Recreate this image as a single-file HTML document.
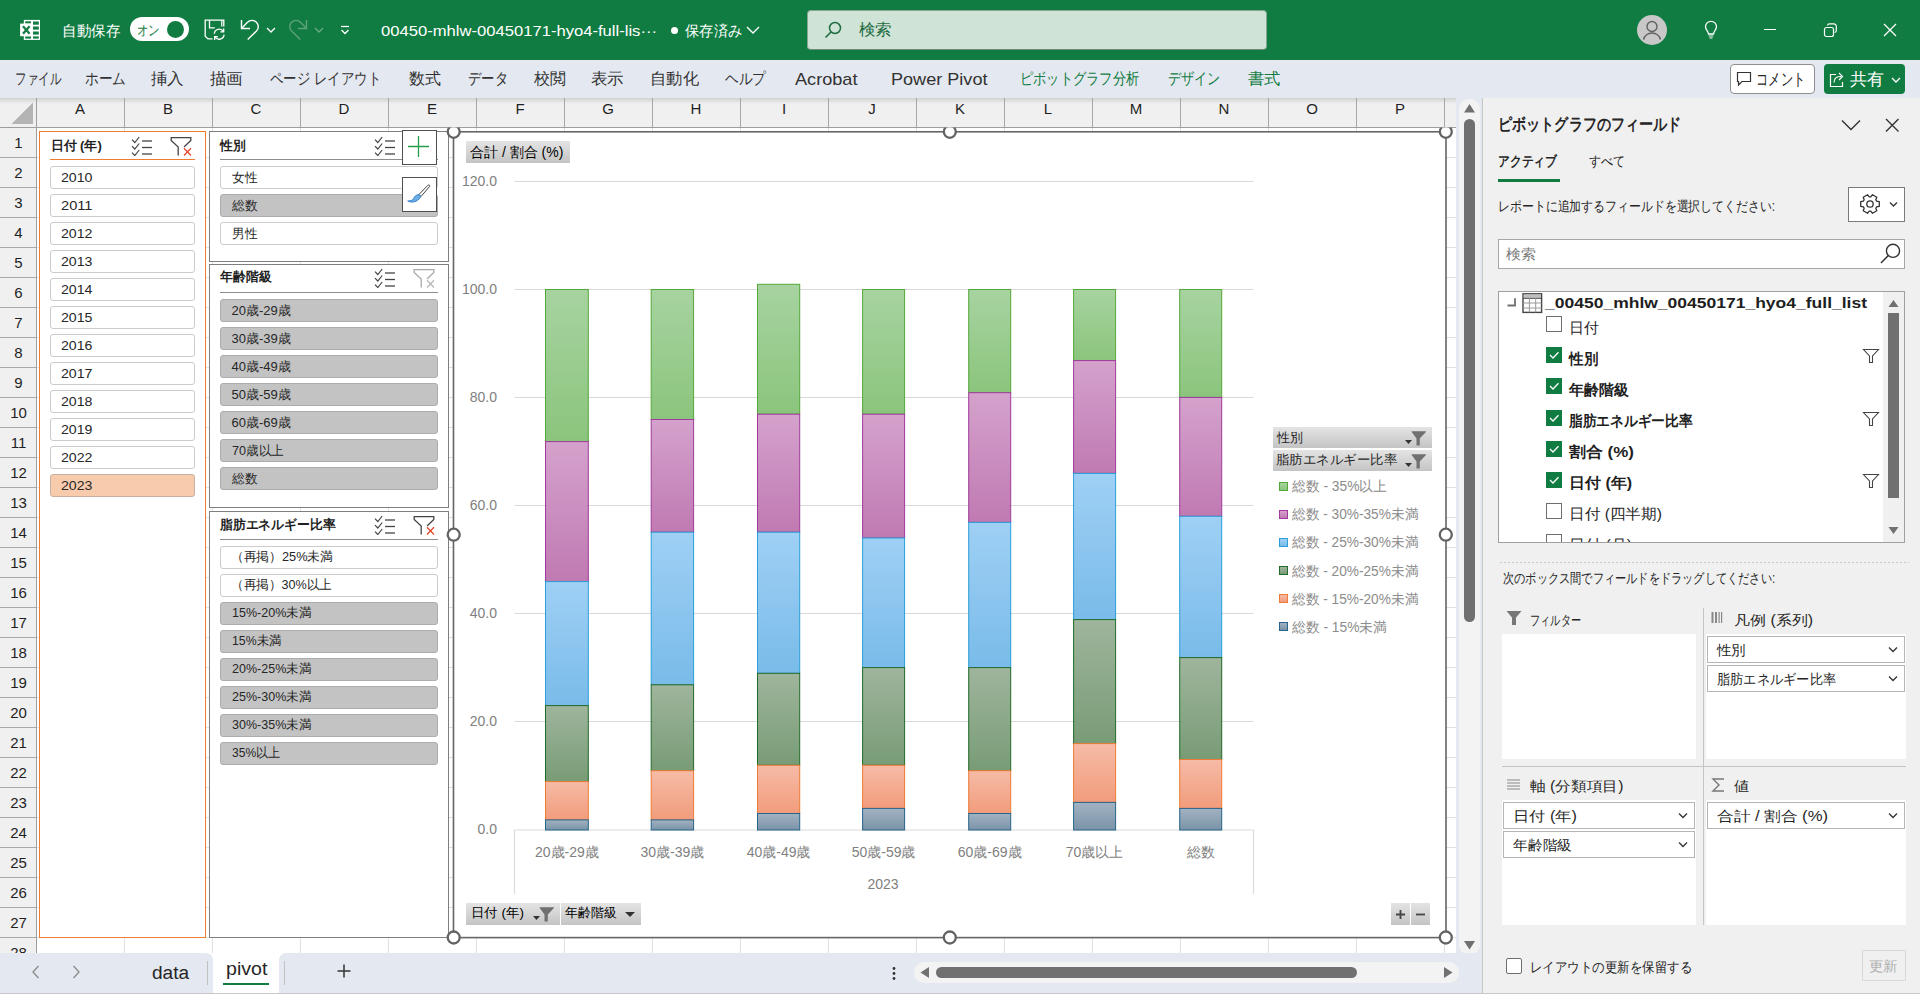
<!DOCTYPE html>
<html lang="ja">
<head>
<meta charset="utf-8">
<style>
*{margin:0;padding:0;box-sizing:border-box}
html,body{width:1920px;height:995px;overflow:hidden}
body{position:relative;font-family:"Liberation Sans",sans-serif;background:#fff;color:#222}
.a{position:absolute;white-space:nowrap}
</style>
</head>
<body>
<div class="a" style="left:0px;top:0px;width:1920px;height:60px;background:#107c41"></div>
<svg class="a" style="left:14px;top:14px" width="32" height="32" viewBox="0 0 32 32"><rect x="9.8" y="5.9" width="16.2" height="20" fill="#fff"/><g fill="#107c41"><rect x="11.2" y="7.3" width="5.8" height="2.2"/><rect x="11.2" y="22.4" width="5.8" height="2.2"/><rect x="19" y="7.5" width="5.8" height="3.2"/><rect x="19" y="12.5" width="5.8" height="3.1"/><rect x="19" y="17.5" width="5.8" height="3.1"/><rect x="19" y="22.4" width="5.8" height="2.2"/></g><rect x="6.1" y="9.6" width="11.4" height="12.6" fill="#fff"/><path d="M9 12.2 L15.6 19.8 M15.6 12.2 L9 19.8" stroke="#107c41" stroke-width="2.2"/></svg>
<div class="a" style="left:62.00px;top:19.50px;font-size:15px;line-height:21px;color:#fff;font-weight:normal;transform:scaleX(0.9667);transform-origin:0 50%;">自動保存</div>
<div class="a" style="left:130px;top:17px;width:59px;height:24px;border-radius:12px;background:#fff"></div>
<div class="a" style="left:137.00px;top:20.00px;font-size:14px;line-height:20px;color:#107c41;font-weight:normal;transform:scaleX(0.8214);transform-origin:0 50%;">オン</div>
<div class="a" style="left:167px;top:21px;width:17px;height:17px;border-radius:50%;background:#107c41"></div>
<svg class="a" style="left:204px;top:19px" width="24" height="22" viewBox="0 0 24 22"><g fill="none" stroke="#fff" stroke-width="1.3"><path d="M8.5 19.9 H4 L1.2 17.2 V1.2 H19.8 V7.6"/><path d="M5.5 1.2 V8.8 H10.8"/><path d="M17.8 1.2 V7.4"/><path d="M10.3 14.8 A4.9 4.9 0 0 1 19.4 12.6"/><path d="M20.1 15.6 A4.9 4.9 0 0 1 11 17.8"/><path d="M19.7 9.6 V12.9 H16.4"/><path d="M10.6 20.9 V17.6 H13.9"/></g></svg>
<svg class="a" style="left:238px;top:18px" width="24" height="24" viewBox="0 0 24 24"><path d="M3.5 2 V10.5 H12" fill="none" stroke="#fff" stroke-width="1.4"/><path d="M4 10 L9.5 4.2 A6.3 6.3 0 0 1 18.45 13.1 L9.7 21.5" fill="none" stroke="#fff" stroke-width="1.4"/></svg>
<svg class="a" style="left:266px;top:26px" width="10" height="8" viewBox="0 0 10 8"><path d="M1 2 L5 6 L9 2" fill="none" stroke="#fff" stroke-width="1.3"/></svg>
<svg class="a" style="left:286px;top:18px" width="24" height="24" viewBox="0 0 24 24"><g transform="translate(24,0) scale(-1,1)"><path d="M3.5 2 V10.5 H12" fill="none" stroke="#5fa27c" stroke-width="1.4"/><path d="M4 10 L9.5 4.2 A6.3 6.3 0 0 1 18.45 13.1 L9.7 21.5" fill="none" stroke="#5fa27c" stroke-width="1.4"/></g></svg>
<svg class="a" style="left:314px;top:26px" width="10" height="8" viewBox="0 0 10 8"><path d="M1 2 L5 6 L9 2" fill="none" stroke="#6aaa86" stroke-width="1.3"/></svg>
<svg class="a" style="left:339px;top:24px" width="12" height="12" viewBox="0 0 12 12"><path d="M2 2.5 H10" stroke="#fff" stroke-width="1.3"/><path d="M2.5 6 L6 9.5 L9.5 6" fill="none" stroke="#fff" stroke-width="1.3"/></svg>
<div class="a" style="left:381.00px;top:19.50px;font-size:15px;line-height:21px;color:#fff;font-weight:normal;transform:scaleX(1.1072);transform-origin:0 50%;">00450-mhlw-00450171-hyo4-full-lis···</div>
<div class="a" style="left:671px;top:27px;width:7px;height:7px;border-radius:50%;background:#fff"></div>
<div class="a" style="left:685.00px;top:19.50px;font-size:15px;line-height:21px;color:#fff;font-weight:normal;transform:scaleX(0.9500);transform-origin:0 50%;">保存済み</div>
<svg class="a" style="left:745px;top:24px" width="16" height="12" viewBox="0 0 16 12"><path d="M2 3 L8 9 L14 3" fill="none" stroke="#fff" stroke-width="1.4"/></svg>
<div class="a" style="left:807px;top:10px;width:460px;height:40px;border-radius:4px;background:#cfe3d7;border:1px solid #86a593;border-bottom-color:#6f8c7b"></div>
<svg class="a" style="left:822px;top:19px" width="22" height="22" viewBox="0 0 22 22"><circle cx="13" cy="9" r="5.5" fill="none" stroke="#1e6b40" stroke-width="1.5"/><path d="M9 13 L3.5 18.5" stroke="#1e6b40" stroke-width="1.6"/></svg>
<div class="a" style="left:859.00px;top:19.00px;font-size:16px;line-height:22px;color:#1e6b40;font-weight:normal;transform:scaleX(1.0312);transform-origin:0 50%;">検索</div>
<div class="a" style="left:1637px;top:15px;width:30px;height:30px;border-radius:50%;background:#c8c8c8"></div>
<svg class="a" style="left:1637px;top:15px" width="30" height="30" viewBox="0 0 30 30"><circle cx="15" cy="11.5" r="5" fill="none" stroke="#616161" stroke-width="1.4"/><path d="M6.5 24.5 A8.8 8.8 0 0 1 23.5 24.5" fill="none" stroke="#616161" stroke-width="1.4"/></svg>
<svg class="a" style="left:1702px;top:20px" width="18" height="20" viewBox="0 0 18 20"><path d="M6.5 14 C6.5 11 3.5 10 3.5 6.8 A5.5 5.5 0 0 1 14.5 6.8 C14.5 10 11.5 11 11.5 14 Z" fill="none" stroke="#fff" stroke-width="1.3"/><path d="M6.8 16 H11.2 M7.5 18 H10.5" stroke="#fff" stroke-width="1.2"/></svg>
<div class="a" style="left:1764px;top:29px;width:12px;height:1.3px;background:#fff"></div>
<svg class="a" style="left:1822px;top:22px" width="16" height="16" viewBox="0 0 16 16"><rect x="2.5" y="5.5" width="9" height="9" rx="2" fill="none" stroke="#fff" stroke-width="1.2"/><path d="M5.5 3.5 A2 2 0 0 1 7.5 1.8 H12 A2.5 2.5 0 0 1 14.3 4 V8.5 A2 2 0 0 1 12.5 10.5" fill="none" stroke="#fff" stroke-width="1.2"/></svg>
<svg class="a" style="left:1882px;top:22px" width="16" height="16" viewBox="0 0 16 16"><path d="M2 2 L14 14 M14 2 L2 14" stroke="#fff" stroke-width="1.3"/></svg>
<div class="a" style="left:0px;top:60px;width:1920px;height:38px;background:#e4e8f0"></div>
<div class="a" style="left:15.00px;top:68.00px;font-size:16px;line-height:22px;color:#323232;font-weight:normal;transform:scaleX(0.7188);transform-origin:0 50%;">ファイル</div>
<div class="a" style="left:85.00px;top:68.00px;font-size:16px;line-height:22px;color:#323232;font-weight:normal;transform:scaleX(0.8542);transform-origin:0 50%;">ホーム</div>
<div class="a" style="left:151.00px;top:68.00px;font-size:16px;line-height:22px;color:#323232;font-weight:normal;transform:scaleX(1.0312);transform-origin:0 50%;">挿入</div>
<div class="a" style="left:209.50px;top:68.00px;font-size:16px;line-height:22px;color:#323232;font-weight:normal;transform:scaleX(1.0312);transform-origin:0 50%;">描画</div>
<div class="a" style="left:270.00px;top:68.00px;font-size:16px;line-height:22px;color:#323232;font-weight:normal;transform:scaleX(0.8380);transform-origin:0 50%;">ページ レイアウト</div>
<div class="a" style="left:409.00px;top:68.00px;font-size:16px;line-height:22px;color:#323232;font-weight:normal;">数式</div>
<div class="a" style="left:467.50px;top:68.00px;font-size:16px;line-height:22px;color:#323232;font-weight:normal;transform:scaleX(0.8333);transform-origin:0 50%;">データ</div>
<div class="a" style="left:534.00px;top:68.00px;font-size:16px;line-height:22px;color:#323232;font-weight:normal;">校閲</div>
<div class="a" style="left:591.00px;top:68.00px;font-size:16px;line-height:22px;color:#323232;font-weight:normal;transform:scaleX(1.0312);transform-origin:0 50%;">表示</div>
<div class="a" style="left:650.00px;top:68.00px;font-size:16px;line-height:22px;color:#323232;font-weight:normal;transform:scaleX(1.0208);transform-origin:0 50%;">自動化</div>
<div class="a" style="left:725.00px;top:68.00px;font-size:16px;line-height:22px;color:#323232;font-weight:normal;transform:scaleX(0.8542);transform-origin:0 50%;">ヘルプ</div>
<div class="a" style="left:795.00px;top:68.00px;font-size:17px;line-height:24px;color:#323232;font-weight:normal;transform:scaleX(1.0667);transform-origin:0 50%;">Acrobat</div>
<div class="a" style="left:891.00px;top:68.00px;font-size:17px;line-height:24px;color:#323232;font-weight:normal;transform:scaleX(1.0639);transform-origin:0 50%;">Power Pivot</div>
<div class="a" style="left:1020.00px;top:68.00px;font-size:16px;line-height:22px;color:#107c41;font-weight:normal;transform:scaleX(0.8264);transform-origin:0 50%;">ピボットグラフ分析</div>
<div class="a" style="left:1167.50px;top:68.00px;font-size:16px;line-height:22px;color:#107c41;font-weight:normal;transform:scaleX(0.8203);transform-origin:0 50%;">デザイン</div>
<div class="a" style="left:1247.50px;top:68.00px;font-size:16px;line-height:22px;color:#107c41;font-weight:normal;transform:scaleX(1.0156);transform-origin:0 50%;">書式</div>
<div class="a" style="left:1730px;top:64px;width:85px;height:30px;border:1px solid #8f8f8f;border-radius:4px;background:#fff"></div>
<svg class="a" style="left:1736px;top:71px" width="16" height="16" viewBox="0 0 16 16"><path d="M1.5 1.5 H14.5 V10.5 H6 L2.5 14 V10.5 H1.5 Z" fill="none" stroke="#333" stroke-width="1.2"/></svg>
<div class="a" style="left:1756.00px;top:67.60px;font-size:17px;line-height:24px;color:#262626;font-weight:normal;transform:scaleX(0.7206);transform-origin:0 50%;">コメント</div>
<div class="a" style="left:1824px;top:64px;width:81px;height:30px;border-radius:4px;background:#107c41"></div>
<svg class="a" style="left:1829px;top:71px" width="18" height="17" viewBox="0 0 18 17"><path d="M7 3.5 H1.5 V15.5 H13.5 V11" fill="none" stroke="#fff" stroke-width="1.2"/><path d="M5 11.5 C5 7 8 5.5 12 5.5 M10 2 L13.5 5.5 L10 9" fill="none" stroke="#fff" stroke-width="1.2"/></svg>
<div class="a" style="left:1850.00px;top:68.00px;font-size:17px;line-height:24px;color:#fff;font-weight:normal;">共有</div>
<svg class="a" style="left:1891px;top:76px" width="10" height="8" viewBox="0 0 10 8"><path d="M1 2 L5 6 L9 2" fill="none" stroke="#fff" stroke-width="1.3"/></svg>
<div class="a" style="left:0px;top:98px;width:1456px;height:855px;background:#fff"></div>
<div class="a" style="left:0px;top:98px;width:1456px;height:29px;background:#f0f0f0"></div>
<div class="a" style="left:0px;top:127px;width:36px;height:826px;background:#f0f0f0"></div>
<div class="a" style="left:0px;top:98px;width:1456px;height:6px;background:linear-gradient(#d2d2d2,rgba(240,240,240,0))"></div>
<svg class="a" style="left:0px;top:0px" width="1920" height="995" viewBox="0 0 1920 995"><line x1="124.5" y1="127" x2="124.5" y2="953" stroke="#e1e1e1"/><line x1="124.5" y1="98" x2="124.5" y2="127" stroke="#a6a6a6"/><line x1="212.5" y1="127" x2="212.5" y2="953" stroke="#e1e1e1"/><line x1="212.5" y1="98" x2="212.5" y2="127" stroke="#a6a6a6"/><line x1="300.5" y1="127" x2="300.5" y2="953" stroke="#e1e1e1"/><line x1="300.5" y1="98" x2="300.5" y2="127" stroke="#a6a6a6"/><line x1="388.5" y1="127" x2="388.5" y2="953" stroke="#e1e1e1"/><line x1="388.5" y1="98" x2="388.5" y2="127" stroke="#a6a6a6"/><line x1="476.5" y1="127" x2="476.5" y2="953" stroke="#e1e1e1"/><line x1="476.5" y1="98" x2="476.5" y2="127" stroke="#a6a6a6"/><line x1="564.5" y1="127" x2="564.5" y2="953" stroke="#e1e1e1"/><line x1="564.5" y1="98" x2="564.5" y2="127" stroke="#a6a6a6"/><line x1="652.5" y1="127" x2="652.5" y2="953" stroke="#e1e1e1"/><line x1="652.5" y1="98" x2="652.5" y2="127" stroke="#a6a6a6"/><line x1="740.5" y1="127" x2="740.5" y2="953" stroke="#e1e1e1"/><line x1="740.5" y1="98" x2="740.5" y2="127" stroke="#a6a6a6"/><line x1="828.5" y1="127" x2="828.5" y2="953" stroke="#e1e1e1"/><line x1="828.5" y1="98" x2="828.5" y2="127" stroke="#a6a6a6"/><line x1="916.5" y1="127" x2="916.5" y2="953" stroke="#e1e1e1"/><line x1="916.5" y1="98" x2="916.5" y2="127" stroke="#a6a6a6"/><line x1="1004.5" y1="127" x2="1004.5" y2="953" stroke="#e1e1e1"/><line x1="1004.5" y1="98" x2="1004.5" y2="127" stroke="#a6a6a6"/><line x1="1092.5" y1="127" x2="1092.5" y2="953" stroke="#e1e1e1"/><line x1="1092.5" y1="98" x2="1092.5" y2="127" stroke="#a6a6a6"/><line x1="1180.5" y1="127" x2="1180.5" y2="953" stroke="#e1e1e1"/><line x1="1180.5" y1="98" x2="1180.5" y2="127" stroke="#a6a6a6"/><line x1="1268.5" y1="127" x2="1268.5" y2="953" stroke="#e1e1e1"/><line x1="1268.5" y1="98" x2="1268.5" y2="127" stroke="#a6a6a6"/><line x1="1356.5" y1="127" x2="1356.5" y2="953" stroke="#e1e1e1"/><line x1="1356.5" y1="98" x2="1356.5" y2="127" stroke="#a6a6a6"/><line x1="1444.5" y1="127" x2="1444.5" y2="953" stroke="#e1e1e1"/><line x1="1444.5" y1="98" x2="1444.5" y2="127" stroke="#a6a6a6"/><line x1="36" y1="157.5" x2="1456" y2="157.5" stroke="#e1e1e1"/><line x1="0" y1="157.5" x2="36" y2="157.5" stroke="#a8a8a8"/><line x1="36" y1="187.5" x2="1456" y2="187.5" stroke="#e1e1e1"/><line x1="0" y1="187.5" x2="36" y2="187.5" stroke="#a8a8a8"/><line x1="36" y1="217.5" x2="1456" y2="217.5" stroke="#e1e1e1"/><line x1="0" y1="217.5" x2="36" y2="217.5" stroke="#a8a8a8"/><line x1="36" y1="247.5" x2="1456" y2="247.5" stroke="#e1e1e1"/><line x1="0" y1="247.5" x2="36" y2="247.5" stroke="#a8a8a8"/><line x1="36" y1="277.5" x2="1456" y2="277.5" stroke="#e1e1e1"/><line x1="0" y1="277.5" x2="36" y2="277.5" stroke="#a8a8a8"/><line x1="36" y1="307.5" x2="1456" y2="307.5" stroke="#e1e1e1"/><line x1="0" y1="307.5" x2="36" y2="307.5" stroke="#a8a8a8"/><line x1="36" y1="337.5" x2="1456" y2="337.5" stroke="#e1e1e1"/><line x1="0" y1="337.5" x2="36" y2="337.5" stroke="#a8a8a8"/><line x1="36" y1="367.5" x2="1456" y2="367.5" stroke="#e1e1e1"/><line x1="0" y1="367.5" x2="36" y2="367.5" stroke="#a8a8a8"/><line x1="36" y1="397.5" x2="1456" y2="397.5" stroke="#e1e1e1"/><line x1="0" y1="397.5" x2="36" y2="397.5" stroke="#a8a8a8"/><line x1="36" y1="427.5" x2="1456" y2="427.5" stroke="#e1e1e1"/><line x1="0" y1="427.5" x2="36" y2="427.5" stroke="#a8a8a8"/><line x1="36" y1="457.5" x2="1456" y2="457.5" stroke="#e1e1e1"/><line x1="0" y1="457.5" x2="36" y2="457.5" stroke="#a8a8a8"/><line x1="36" y1="487.5" x2="1456" y2="487.5" stroke="#e1e1e1"/><line x1="0" y1="487.5" x2="36" y2="487.5" stroke="#a8a8a8"/><line x1="36" y1="517.5" x2="1456" y2="517.5" stroke="#e1e1e1"/><line x1="0" y1="517.5" x2="36" y2="517.5" stroke="#a8a8a8"/><line x1="36" y1="547.5" x2="1456" y2="547.5" stroke="#e1e1e1"/><line x1="0" y1="547.5" x2="36" y2="547.5" stroke="#a8a8a8"/><line x1="36" y1="577.5" x2="1456" y2="577.5" stroke="#e1e1e1"/><line x1="0" y1="577.5" x2="36" y2="577.5" stroke="#a8a8a8"/><line x1="36" y1="607.5" x2="1456" y2="607.5" stroke="#e1e1e1"/><line x1="0" y1="607.5" x2="36" y2="607.5" stroke="#a8a8a8"/><line x1="36" y1="637.5" x2="1456" y2="637.5" stroke="#e1e1e1"/><line x1="0" y1="637.5" x2="36" y2="637.5" stroke="#a8a8a8"/><line x1="36" y1="667.5" x2="1456" y2="667.5" stroke="#e1e1e1"/><line x1="0" y1="667.5" x2="36" y2="667.5" stroke="#a8a8a8"/><line x1="36" y1="697.5" x2="1456" y2="697.5" stroke="#e1e1e1"/><line x1="0" y1="697.5" x2="36" y2="697.5" stroke="#a8a8a8"/><line x1="36" y1="727.5" x2="1456" y2="727.5" stroke="#e1e1e1"/><line x1="0" y1="727.5" x2="36" y2="727.5" stroke="#a8a8a8"/><line x1="36" y1="757.5" x2="1456" y2="757.5" stroke="#e1e1e1"/><line x1="0" y1="757.5" x2="36" y2="757.5" stroke="#a8a8a8"/><line x1="36" y1="787.5" x2="1456" y2="787.5" stroke="#e1e1e1"/><line x1="0" y1="787.5" x2="36" y2="787.5" stroke="#a8a8a8"/><line x1="36" y1="817.5" x2="1456" y2="817.5" stroke="#e1e1e1"/><line x1="0" y1="817.5" x2="36" y2="817.5" stroke="#a8a8a8"/><line x1="36" y1="847.5" x2="1456" y2="847.5" stroke="#e1e1e1"/><line x1="0" y1="847.5" x2="36" y2="847.5" stroke="#a8a8a8"/><line x1="36" y1="877.5" x2="1456" y2="877.5" stroke="#e1e1e1"/><line x1="0" y1="877.5" x2="36" y2="877.5" stroke="#a8a8a8"/><line x1="36" y1="907.5" x2="1456" y2="907.5" stroke="#e1e1e1"/><line x1="0" y1="907.5" x2="36" y2="907.5" stroke="#a8a8a8"/><line x1="36" y1="937.5" x2="1456" y2="937.5" stroke="#e1e1e1"/><line x1="0" y1="937.5" x2="36" y2="937.5" stroke="#a8a8a8"/><line x1="0" y1="127.5" x2="1456" y2="127.5" stroke="#9e9e9e"/><line x1="36.5" y1="98" x2="36.5" y2="953" stroke="#9e9e9e"/><path d="M11.5 124 L33 124 L33 102.5 Z" fill="#b4b4b4"/></svg>
<div class="a" style="left:74.99px;top:98.00px;font-size:15px;line-height:21px;color:#1f1f1f;font-weight:normal;">A</div>
<div class="a" style="left:162.99px;top:98.00px;font-size:15px;line-height:21px;color:#1f1f1f;font-weight:normal;">B</div>
<div class="a" style="left:250.58px;top:98.00px;font-size:15px;line-height:21px;color:#1f1f1f;font-weight:normal;">C</div>
<div class="a" style="left:338.58px;top:98.00px;font-size:15px;line-height:21px;color:#1f1f1f;font-weight:normal;">D</div>
<div class="a" style="left:426.99px;top:98.00px;font-size:15px;line-height:21px;color:#1f1f1f;font-weight:normal;">E</div>
<div class="a" style="left:515.41px;top:98.00px;font-size:15px;line-height:21px;color:#1f1f1f;font-weight:normal;">F</div>
<div class="a" style="left:602.16px;top:98.00px;font-size:15px;line-height:21px;color:#1f1f1f;font-weight:normal;">G</div>
<div class="a" style="left:690.58px;top:98.00px;font-size:15px;line-height:21px;color:#1f1f1f;font-weight:normal;">H</div>
<div class="a" style="left:781.91px;top:98.00px;font-size:15px;line-height:21px;color:#1f1f1f;font-weight:normal;">I</div>
<div class="a" style="left:868.25px;top:98.00px;font-size:15px;line-height:21px;color:#1f1f1f;font-weight:normal;">J</div>
<div class="a" style="left:954.99px;top:98.00px;font-size:15px;line-height:21px;color:#1f1f1f;font-weight:normal;">K</div>
<div class="a" style="left:1043.83px;top:98.00px;font-size:15px;line-height:21px;color:#1f1f1f;font-weight:normal;">L</div>
<div class="a" style="left:1129.75px;top:98.00px;font-size:15px;line-height:21px;color:#1f1f1f;font-weight:normal;">M</div>
<div class="a" style="left:1218.58px;top:98.00px;font-size:15px;line-height:21px;color:#1f1f1f;font-weight:normal;">N</div>
<div class="a" style="left:1306.16px;top:98.00px;font-size:15px;line-height:21px;color:#1f1f1f;font-weight:normal;">O</div>
<div class="a" style="left:1394.99px;top:98.00px;font-size:15px;line-height:21px;color:#1f1f1f;font-weight:normal;">P</div>
<div class="a" style="left:14.33px;top:131.50px;font-size:15px;line-height:21px;color:#1f1f1f;font-weight:normal;">1</div>
<div class="a" style="left:14.33px;top:161.50px;font-size:15px;line-height:21px;color:#1f1f1f;font-weight:normal;">2</div>
<div class="a" style="left:14.33px;top:191.50px;font-size:15px;line-height:21px;color:#1f1f1f;font-weight:normal;">3</div>
<div class="a" style="left:14.33px;top:221.50px;font-size:15px;line-height:21px;color:#1f1f1f;font-weight:normal;">4</div>
<div class="a" style="left:14.33px;top:251.50px;font-size:15px;line-height:21px;color:#1f1f1f;font-weight:normal;">5</div>
<div class="a" style="left:14.33px;top:281.50px;font-size:15px;line-height:21px;color:#1f1f1f;font-weight:normal;">6</div>
<div class="a" style="left:14.33px;top:311.50px;font-size:15px;line-height:21px;color:#1f1f1f;font-weight:normal;">7</div>
<div class="a" style="left:14.33px;top:341.50px;font-size:15px;line-height:21px;color:#1f1f1f;font-weight:normal;">8</div>
<div class="a" style="left:14.33px;top:371.50px;font-size:15px;line-height:21px;color:#1f1f1f;font-weight:normal;">9</div>
<div class="a" style="left:10.16px;top:401.50px;font-size:15px;line-height:21px;color:#1f1f1f;font-weight:normal;">10</div>
<div class="a" style="left:10.71px;top:431.50px;font-size:15px;line-height:21px;color:#1f1f1f;font-weight:normal;">11</div>
<div class="a" style="left:10.16px;top:461.50px;font-size:15px;line-height:21px;color:#1f1f1f;font-weight:normal;">12</div>
<div class="a" style="left:10.16px;top:491.50px;font-size:15px;line-height:21px;color:#1f1f1f;font-weight:normal;">13</div>
<div class="a" style="left:10.16px;top:521.50px;font-size:15px;line-height:21px;color:#1f1f1f;font-weight:normal;">14</div>
<div class="a" style="left:10.16px;top:551.50px;font-size:15px;line-height:21px;color:#1f1f1f;font-weight:normal;">15</div>
<div class="a" style="left:10.16px;top:581.50px;font-size:15px;line-height:21px;color:#1f1f1f;font-weight:normal;">16</div>
<div class="a" style="left:10.16px;top:611.50px;font-size:15px;line-height:21px;color:#1f1f1f;font-weight:normal;">17</div>
<div class="a" style="left:10.16px;top:641.50px;font-size:15px;line-height:21px;color:#1f1f1f;font-weight:normal;">18</div>
<div class="a" style="left:10.16px;top:671.50px;font-size:15px;line-height:21px;color:#1f1f1f;font-weight:normal;">19</div>
<div class="a" style="left:10.16px;top:701.50px;font-size:15px;line-height:21px;color:#1f1f1f;font-weight:normal;">20</div>
<div class="a" style="left:10.16px;top:731.50px;font-size:15px;line-height:21px;color:#1f1f1f;font-weight:normal;">21</div>
<div class="a" style="left:10.16px;top:761.50px;font-size:15px;line-height:21px;color:#1f1f1f;font-weight:normal;">22</div>
<div class="a" style="left:10.16px;top:791.50px;font-size:15px;line-height:21px;color:#1f1f1f;font-weight:normal;">23</div>
<div class="a" style="left:10.16px;top:821.50px;font-size:15px;line-height:21px;color:#1f1f1f;font-weight:normal;">24</div>
<div class="a" style="left:10.16px;top:851.50px;font-size:15px;line-height:21px;color:#1f1f1f;font-weight:normal;">25</div>
<div class="a" style="left:10.16px;top:881.50px;font-size:15px;line-height:21px;color:#1f1f1f;font-weight:normal;">26</div>
<div class="a" style="left:10.16px;top:911.50px;font-size:15px;line-height:21px;color:#1f1f1f;font-weight:normal;">27</div>
<div class="a" style="left:10.16px;top:941.50px;font-size:15px;line-height:21px;color:#1f1f1f;font-weight:normal;">28</div>
<div class="a" style="left:39px;top:131px;width:167px;height:807px;border:1px solid #ed7d31;background:#fff"></div>
<div class="a" style="left:50.50px;top:136.50px;font-size:13px;line-height:18px;color:#1f1f1f;font-weight:bold;">日付 (年)</div>
<svg class="a" style="left:131px;top:136px" width="22" height="20" viewBox="0 0 22 20"><path d="M1 3.7 L3.8 6.5 L8.2 1.0" fill="none" stroke="#444" stroke-width="1.2"/><line x1="11" y1="5.0" x2="21" y2="5.0" stroke="#444" stroke-width="1.3"/><path d="M1 10.2 L3.8 13.0 L8.2 7.5" fill="none" stroke="#444" stroke-width="1.2"/><line x1="11" y1="11.5" x2="21" y2="11.5" stroke="#444" stroke-width="1.3"/><path d="M1 16.7 L3.8 19.5 L8.2 14.0" fill="none" stroke="#444" stroke-width="1.2"/><line x1="11" y1="18.0" x2="21" y2="18.0" stroke="#444" stroke-width="1.3"/></svg>
<svg class="a" style="left:170px;top:136px" width="22" height="20" viewBox="0 0 22 20"><path d="M8.2 19.5 V11 L1.2 4.5 V1.6 H20.8 V4.5 L14 11" fill="none" stroke="#444" stroke-width="1.3"/><path d="M14 12.2 L21 19.5 M21 12.2 L14 19.5" stroke="#e8482b" stroke-width="1.3"/></svg>
<div class="a" style="left:50px;top:159px;width:145px;height:1px;background:#ed7d31"></div>
<div class="a" style="left:50px;top:166px;width:145px;height:23px;background:#fff;border:1px solid #cccccc;border-radius:3px"></div>
<div class="a" style="left:61.00px;top:168.50px;font-size:13px;line-height:18px;color:#262626;font-weight:normal;transform:scaleX(1.0891);transform-origin:0 50%;">2010</div>
<div class="a" style="left:50px;top:194px;width:145px;height:23px;background:#fff;border:1px solid #cccccc;border-radius:3px"></div>
<div class="a" style="left:61.00px;top:196.50px;font-size:13px;line-height:18px;color:#262626;font-weight:normal;transform:scaleX(1.1263);transform-origin:0 50%;">2011</div>
<div class="a" style="left:50px;top:222px;width:145px;height:23px;background:#fff;border:1px solid #cccccc;border-radius:3px"></div>
<div class="a" style="left:61.00px;top:224.50px;font-size:13px;line-height:18px;color:#262626;font-weight:normal;transform:scaleX(1.0891);transform-origin:0 50%;">2012</div>
<div class="a" style="left:50px;top:250px;width:145px;height:23px;background:#fff;border:1px solid #cccccc;border-radius:3px"></div>
<div class="a" style="left:61.00px;top:252.50px;font-size:13px;line-height:18px;color:#262626;font-weight:normal;transform:scaleX(1.0891);transform-origin:0 50%;">2013</div>
<div class="a" style="left:50px;top:278px;width:145px;height:23px;background:#fff;border:1px solid #cccccc;border-radius:3px"></div>
<div class="a" style="left:61.00px;top:280.50px;font-size:13px;line-height:18px;color:#262626;font-weight:normal;transform:scaleX(1.0891);transform-origin:0 50%;">2014</div>
<div class="a" style="left:50px;top:306px;width:145px;height:23px;background:#fff;border:1px solid #cccccc;border-radius:3px"></div>
<div class="a" style="left:61.00px;top:308.50px;font-size:13px;line-height:18px;color:#262626;font-weight:normal;transform:scaleX(1.0891);transform-origin:0 50%;">2015</div>
<div class="a" style="left:50px;top:334px;width:145px;height:23px;background:#fff;border:1px solid #cccccc;border-radius:3px"></div>
<div class="a" style="left:61.00px;top:336.50px;font-size:13px;line-height:18px;color:#262626;font-weight:normal;transform:scaleX(1.0891);transform-origin:0 50%;">2016</div>
<div class="a" style="left:50px;top:362px;width:145px;height:23px;background:#fff;border:1px solid #cccccc;border-radius:3px"></div>
<div class="a" style="left:61.00px;top:364.50px;font-size:13px;line-height:18px;color:#262626;font-weight:normal;transform:scaleX(1.0891);transform-origin:0 50%;">2017</div>
<div class="a" style="left:50px;top:390px;width:145px;height:23px;background:#fff;border:1px solid #cccccc;border-radius:3px"></div>
<div class="a" style="left:61.00px;top:392.50px;font-size:13px;line-height:18px;color:#262626;font-weight:normal;transform:scaleX(1.0891);transform-origin:0 50%;">2018</div>
<div class="a" style="left:50px;top:418px;width:145px;height:23px;background:#fff;border:1px solid #cccccc;border-radius:3px"></div>
<div class="a" style="left:61.00px;top:420.50px;font-size:13px;line-height:18px;color:#262626;font-weight:normal;transform:scaleX(1.0891);transform-origin:0 50%;">2019</div>
<div class="a" style="left:50px;top:446px;width:145px;height:23px;background:#fff;border:1px solid #cccccc;border-radius:3px"></div>
<div class="a" style="left:61.00px;top:448.50px;font-size:13px;line-height:18px;color:#262626;font-weight:normal;transform:scaleX(1.0891);transform-origin:0 50%;">2022</div>
<div class="a" style="left:50px;top:474px;width:145px;height:23px;background:#f8cbad;border:1px solid #c9b0a0;border-radius:3px"></div>
<div class="a" style="left:61.00px;top:476.50px;font-size:13px;line-height:18px;color:#262626;font-weight:normal;transform:scaleX(1.0891);transform-origin:0 50%;">2023</div>
<div class="a" style="left:209px;top:131px;width:240px;height:131px;border:1px solid #7f7f7f;background:#fff"></div>
<div class="a" style="left:220.00px;top:136.50px;font-size:13px;line-height:18px;color:#1f1f1f;font-weight:bold;transform:scaleX(0.9808);transform-origin:0 50%;">性別</div>
<svg class="a" style="left:374px;top:136px" width="22" height="20" viewBox="0 0 22 20"><path d="M1 3.7 L3.8 6.5 L8.2 1.0" fill="none" stroke="#444" stroke-width="1.2"/><line x1="11" y1="5.0" x2="21" y2="5.0" stroke="#444" stroke-width="1.3"/><path d="M1 10.2 L3.8 13.0 L8.2 7.5" fill="none" stroke="#444" stroke-width="1.2"/><line x1="11" y1="11.5" x2="21" y2="11.5" stroke="#444" stroke-width="1.3"/><path d="M1 16.7 L3.8 19.5 L8.2 14.0" fill="none" stroke="#444" stroke-width="1.2"/><line x1="11" y1="18.0" x2="21" y2="18.0" stroke="#444" stroke-width="1.3"/></svg>
<div class="a" style="left:220px;top:159px;width:218px;height:1px;background:#8c8c8c"></div>
<div class="a" style="left:220px;top:166px;width:218px;height:23px;background:#fff;border:1px solid #cccccc;border-radius:3px"></div>
<div class="a" style="left:231.50px;top:168.50px;font-size:13px;line-height:18px;color:#262626;font-weight:normal;transform:scaleX(0.9808);transform-origin:0 50%;">女性</div>
<div class="a" style="left:220px;top:194px;width:218px;height:23px;background:#c3c3c3;border:1px solid #acacac;border-radius:3px"></div>
<div class="a" style="left:231.50px;top:196.50px;font-size:13px;line-height:18px;color:#262626;font-weight:normal;transform:scaleX(0.9808);transform-origin:0 50%;">総数</div>
<div class="a" style="left:220px;top:222px;width:218px;height:23px;background:#fff;border:1px solid #cccccc;border-radius:3px"></div>
<div class="a" style="left:231.50px;top:224.50px;font-size:13px;line-height:18px;color:#262626;font-weight:normal;transform:scaleX(0.9808);transform-origin:0 50%;">男性</div>
<div class="a" style="left:402px;top:130px;width:35px;height:35px;background:#fff;border:1px solid #505050"></div>
<svg class="a" style="left:402px;top:130px" width="35" height="35" viewBox="0 0 35 35"><path d="M16.5 6 V27 M6 16.5 H27" stroke="#21a04a" stroke-width="1.3"/></svg>
<div class="a" style="left:402px;top:177px;width:35px;height:35px;background:#fff;border:1px solid #505050"></div>
<svg class="a" style="left:402px;top:177px" width="35" height="35" viewBox="0 0 35 35"><path d="M25.8 8.3 C27 7.3 28.3 8.4 27.5 9.6 L19 19.5 L16.8 17.7 Z" fill="#fff" stroke="#444" stroke-width="1"/><path d="M16.8 17.7 C14 17.5 12.5 19.5 11.8 21.3 C11 23 9 24 5.7 24 C9.5 26 15.5 25.5 19 19.5 Z" fill="#6aaee6" stroke="#2f7bc8" stroke-width="0.9"/></svg>
<div class="a" style="left:209px;top:264px;width:240px;height:244px;border:1px solid #7f7f7f;background:#fff"></div>
<div class="a" style="left:220.00px;top:268.00px;font-size:13px;line-height:18px;color:#1f1f1f;font-weight:bold;transform:scaleX(0.9942);transform-origin:0 50%;">年齢階級</div>
<svg class="a" style="left:374px;top:268px" width="22" height="20" viewBox="0 0 22 20"><path d="M1 3.7 L3.8 6.5 L8.2 1.0" fill="none" stroke="#444" stroke-width="1.2"/><line x1="11" y1="5.0" x2="21" y2="5.0" stroke="#444" stroke-width="1.3"/><path d="M1 10.2 L3.8 13.0 L8.2 7.5" fill="none" stroke="#444" stroke-width="1.2"/><line x1="11" y1="11.5" x2="21" y2="11.5" stroke="#444" stroke-width="1.3"/><path d="M1 16.7 L3.8 19.5 L8.2 14.0" fill="none" stroke="#444" stroke-width="1.2"/><line x1="11" y1="18.0" x2="21" y2="18.0" stroke="#444" stroke-width="1.3"/></svg>
<svg class="a" style="left:413px;top:268px" width="22" height="20" viewBox="0 0 22 20"><path d="M8.2 19.5 V11 L1.2 4.5 V1.6 H20.8 V4.5 L14 11" fill="none" stroke="#a8a8a8" stroke-width="1.3"/><path d="M14 12.2 L21 19.5 M21 12.2 L14 19.5" stroke="#b8b8b8" stroke-width="1.3"/></svg>
<div class="a" style="left:220px;top:292px;width:218px;height:1px;background:#8c8c8c"></div>
<div class="a" style="left:220px;top:299px;width:218px;height:23px;background:#c3c3c3;border:1px solid #acacac;border-radius:3px"></div>
<div class="a" style="left:231.50px;top:301.50px;font-size:13px;line-height:18px;color:#262626;font-weight:normal;">20歳-29歳</div>
<div class="a" style="left:220px;top:327px;width:218px;height:23px;background:#c3c3c3;border:1px solid #acacac;border-radius:3px"></div>
<div class="a" style="left:231.50px;top:329.50px;font-size:13px;line-height:18px;color:#262626;font-weight:normal;">30歳-39歳</div>
<div class="a" style="left:220px;top:355px;width:218px;height:23px;background:#c3c3c3;border:1px solid #acacac;border-radius:3px"></div>
<div class="a" style="left:231.50px;top:357.50px;font-size:13px;line-height:18px;color:#262626;font-weight:normal;">40歳-49歳</div>
<div class="a" style="left:220px;top:383px;width:218px;height:23px;background:#c3c3c3;border:1px solid #acacac;border-radius:3px"></div>
<div class="a" style="left:231.50px;top:385.50px;font-size:13px;line-height:18px;color:#262626;font-weight:normal;">50歳-59歳</div>
<div class="a" style="left:220px;top:411px;width:218px;height:23px;background:#c3c3c3;border:1px solid #acacac;border-radius:3px"></div>
<div class="a" style="left:231.50px;top:413.50px;font-size:13px;line-height:18px;color:#262626;font-weight:normal;">60歳-69歳</div>
<div class="a" style="left:220px;top:439px;width:218px;height:23px;background:#c3c3c3;border:1px solid #acacac;border-radius:3px"></div>
<div class="a" style="left:231.50px;top:441.50px;font-size:13px;line-height:18px;color:#262626;font-weight:normal;transform:scaleX(0.9707);transform-origin:0 50%;">70歳以上</div>
<div class="a" style="left:220px;top:467px;width:218px;height:23px;background:#c3c3c3;border:1px solid #acacac;border-radius:3px"></div>
<div class="a" style="left:231.50px;top:469.50px;font-size:13px;line-height:18px;color:#262626;font-weight:normal;transform:scaleX(0.9731);transform-origin:0 50%;">総数</div>
<div class="a" style="left:209px;top:511px;width:240px;height:427px;border:1px solid #7f7f7f;background:#fff"></div>
<div class="a" style="left:220.00px;top:516.30px;font-size:13px;line-height:18px;color:#1f1f1f;font-weight:bold;transform:scaleX(0.9863);transform-origin:0 50%;">脂肪エネルギー比率</div>
<svg class="a" style="left:374px;top:515px" width="22" height="20" viewBox="0 0 22 20"><path d="M1 3.7 L3.8 6.5 L8.2 1.0" fill="none" stroke="#444" stroke-width="1.2"/><line x1="11" y1="5.0" x2="21" y2="5.0" stroke="#444" stroke-width="1.3"/><path d="M1 10.2 L3.8 13.0 L8.2 7.5" fill="none" stroke="#444" stroke-width="1.2"/><line x1="11" y1="11.5" x2="21" y2="11.5" stroke="#444" stroke-width="1.3"/><path d="M1 16.7 L3.8 19.5 L8.2 14.0" fill="none" stroke="#444" stroke-width="1.2"/><line x1="11" y1="18.0" x2="21" y2="18.0" stroke="#444" stroke-width="1.3"/></svg>
<svg class="a" style="left:413px;top:515px" width="22" height="20" viewBox="0 0 22 20"><path d="M8.2 19.5 V11 L1.2 4.5 V1.6 H20.8 V4.5 L14 11" fill="none" stroke="#444" stroke-width="1.3"/><path d="M14 12.2 L21 19.5 M21 12.2 L14 19.5" stroke="#e8482b" stroke-width="1.3"/></svg>
<div class="a" style="left:220px;top:539px;width:218px;height:1px;background:#8c8c8c"></div>
<div class="a" style="left:220px;top:545.5px;width:218px;height:23px;background:#fff;border:1px solid #cccccc;border-radius:3px"></div>
<div class="a" style="left:231.00px;top:548.00px;font-size:13px;line-height:18px;color:#262626;font-weight:normal;transform:scaleX(0.9805);transform-origin:0 50%;">（再掲）25%未満</div>
<div class="a" style="left:220px;top:573.5px;width:218px;height:23px;background:#fff;border:1px solid #cccccc;border-radius:3px"></div>
<div class="a" style="left:231.00px;top:576.00px;font-size:13px;line-height:18px;color:#262626;font-weight:normal;transform:scaleX(0.9709);transform-origin:0 50%;">（再掲）30%以上</div>
<div class="a" style="left:220px;top:601.5px;width:218px;height:23px;background:#c3c3c3;border:1px solid #acacac;border-radius:3px"></div>
<div class="a" style="left:231.50px;top:604.00px;font-size:13px;line-height:18px;color:#262626;font-weight:normal;transform:scaleX(0.9627);transform-origin:0 50%;">15%-20%未満</div>
<div class="a" style="left:220px;top:629.5px;width:218px;height:23px;background:#c3c3c3;border:1px solid #acacac;border-radius:3px"></div>
<div class="a" style="left:231.50px;top:632.00px;font-size:13px;line-height:18px;color:#262626;font-weight:normal;transform:scaleX(0.9456);transform-origin:0 50%;">15%未満</div>
<div class="a" style="left:220px;top:657.5px;width:218px;height:23px;background:#c3c3c3;border:1px solid #acacac;border-radius:3px"></div>
<div class="a" style="left:231.50px;top:660.00px;font-size:13px;line-height:18px;color:#262626;font-weight:normal;transform:scaleX(0.9627);transform-origin:0 50%;">20%-25%未満</div>
<div class="a" style="left:220px;top:685.5px;width:218px;height:23px;background:#c3c3c3;border:1px solid #acacac;border-radius:3px"></div>
<div class="a" style="left:231.50px;top:688.00px;font-size:13px;line-height:18px;color:#262626;font-weight:normal;transform:scaleX(0.9627);transform-origin:0 50%;">25%-30%未満</div>
<div class="a" style="left:220px;top:713.5px;width:218px;height:23px;background:#c3c3c3;border:1px solid #acacac;border-radius:3px"></div>
<div class="a" style="left:231.50px;top:716.00px;font-size:13px;line-height:18px;color:#262626;font-weight:normal;transform:scaleX(0.9627);transform-origin:0 50%;">30%-35%未満</div>
<div class="a" style="left:220px;top:741.5px;width:218px;height:23px;background:#c3c3c3;border:1px solid #acacac;border-radius:3px"></div>
<div class="a" style="left:231.50px;top:744.00px;font-size:13px;line-height:18px;color:#262626;font-weight:normal;transform:scaleX(0.9321);transform-origin:0 50%;">35%以上</div>
<div class="a" style="left:453px;top:131.5px;width:993px;height:806px;background:#fff"></div>
<svg class="a" style="left:0px;top:0px" width="1920" height="995" viewBox="0 0 1920 995"><defs><linearGradient id="g0" x1="0" y1="0" x2="0" y2="1"><stop offset="0" stop-color="#a7d3a0"/><stop offset="1" stop-color="#8bc57d"/></linearGradient><linearGradient id="g1" x1="0" y1="0" x2="0" y2="1"><stop offset="0" stop-color="#d4a2cc"/><stop offset="1" stop-color="#c07ab2"/></linearGradient><linearGradient id="g2" x1="0" y1="0" x2="0" y2="1"><stop offset="0" stop-color="#9fd0f5"/><stop offset="1" stop-color="#79bbe9"/></linearGradient><linearGradient id="g3" x1="0" y1="0" x2="0" y2="1"><stop offset="0" stop-color="#9fb59d"/><stop offset="1" stop-color="#789c76"/></linearGradient><linearGradient id="g4" x1="0" y1="0" x2="0" y2="1"><stop offset="0" stop-color="#f6bba6"/><stop offset="1" stop-color="#f29c7c"/></linearGradient><linearGradient id="g5" x1="0" y1="0" x2="0" y2="1"><stop offset="0" stop-color="#a2b3c2"/><stop offset="1" stop-color="#7a93a8"/></linearGradient></defs><line x1="514.5" y1="181.5" x2="1253.5" y2="181.5" stroke="#d9d9d9" stroke-width="1"/><line x1="514.5" y1="289.5" x2="1253.5" y2="289.5" stroke="#d9d9d9" stroke-width="1"/><line x1="514.5" y1="397.5" x2="1253.5" y2="397.5" stroke="#d9d9d9" stroke-width="1"/><line x1="514.5" y1="505.5" x2="1253.5" y2="505.5" stroke="#d9d9d9" stroke-width="1"/><line x1="514.5" y1="613.5" x2="1253.5" y2="613.5" stroke="#d9d9d9" stroke-width="1"/><line x1="514.5" y1="721.5" x2="1253.5" y2="721.5" stroke="#d9d9d9" stroke-width="1"/><line x1="514.5" y1="830" x2="1253.5" y2="830" stroke="#d9d9d9" stroke-width="1.2"/><line x1="514.5" y1="830" x2="514.5" y2="894" stroke="#d9d9d9" stroke-width="1.2"/><line x1="1253.5" y1="830" x2="1253.5" y2="894" stroke="#d9d9d9" stroke-width="1.2"/><rect x="545.5" y="289.5" width="42.799999999999955" height="152.10000000000002" fill="url(#g0)" stroke="#54a83a" stroke-width="1"/><rect x="545.5" y="441.6" width="42.799999999999955" height="140.0" fill="url(#g1)" stroke="#a03a9c" stroke-width="1"/><rect x="545.5" y="581.6" width="42.799999999999955" height="124.0" fill="url(#g2)" stroke="#2a9fd8" stroke-width="1"/><rect x="545.5" y="705.6" width="42.799999999999955" height="76.0" fill="url(#g3)" stroke="#226b2a" stroke-width="1"/><rect x="545.5" y="781.6" width="42.799999999999955" height="38.299999999999955" fill="url(#g4)" stroke="#ee7b35" stroke-width="1"/><rect x="545.5" y="819.9" width="42.799999999999955" height="10.100000000000023" fill="url(#g5)" stroke="#27648a" stroke-width="1"/><rect x="651.2" y="289.5" width="42.39999999999998" height="130.0" fill="url(#g0)" stroke="#54a83a" stroke-width="1"/><rect x="651.2" y="419.5" width="42.39999999999998" height="112.70000000000005" fill="url(#g1)" stroke="#a03a9c" stroke-width="1"/><rect x="651.2" y="532.2" width="42.39999999999998" height="152.5999999999999" fill="url(#g2)" stroke="#2a9fd8" stroke-width="1"/><rect x="651.2" y="684.8" width="42.39999999999998" height="85.90000000000009" fill="url(#g3)" stroke="#226b2a" stroke-width="1"/><rect x="651.2" y="770.7" width="42.39999999999998" height="49.19999999999993" fill="url(#g4)" stroke="#ee7b35" stroke-width="1"/><rect x="651.2" y="819.9" width="42.39999999999998" height="10.100000000000023" fill="url(#g5)" stroke="#27648a" stroke-width="1"/><rect x="757.5" y="284.3" width="42.200000000000045" height="129.89999999999998" fill="url(#g0)" stroke="#54a83a" stroke-width="1"/><rect x="757.5" y="414.2" width="42.200000000000045" height="118.00000000000006" fill="url(#g1)" stroke="#a03a9c" stroke-width="1"/><rect x="757.5" y="532.2" width="42.200000000000045" height="141.0999999999999" fill="url(#g2)" stroke="#2a9fd8" stroke-width="1"/><rect x="757.5" y="673.3" width="42.200000000000045" height="92.0" fill="url(#g3)" stroke="#226b2a" stroke-width="1"/><rect x="757.5" y="765.3" width="42.200000000000045" height="48.200000000000045" fill="url(#g4)" stroke="#ee7b35" stroke-width="1"/><rect x="757.5" y="813.5" width="42.200000000000045" height="16.5" fill="url(#g5)" stroke="#27648a" stroke-width="1"/><rect x="862.6" y="289.5" width="42.0" height="124.69999999999999" fill="url(#g0)" stroke="#54a83a" stroke-width="1"/><rect x="862.6" y="414.2" width="42.0" height="123.80000000000001" fill="url(#g1)" stroke="#a03a9c" stroke-width="1"/><rect x="862.6" y="538.0" width="42.0" height="129.60000000000002" fill="url(#g2)" stroke="#2a9fd8" stroke-width="1"/><rect x="862.6" y="667.6" width="42.0" height="97.69999999999993" fill="url(#g3)" stroke="#226b2a" stroke-width="1"/><rect x="862.6" y="765.3" width="42.0" height="43.10000000000002" fill="url(#g4)" stroke="#ee7b35" stroke-width="1"/><rect x="862.6" y="808.4" width="42.0" height="21.600000000000023" fill="url(#g5)" stroke="#27648a" stroke-width="1"/><rect x="968.7" y="289.5" width="42.0" height="103.19999999999999" fill="url(#g0)" stroke="#54a83a" stroke-width="1"/><rect x="968.7" y="392.7" width="42.0" height="129.7" fill="url(#g1)" stroke="#a03a9c" stroke-width="1"/><rect x="968.7" y="522.4" width="42.0" height="145.20000000000005" fill="url(#g2)" stroke="#2a9fd8" stroke-width="1"/><rect x="968.7" y="667.6" width="42.0" height="103.10000000000002" fill="url(#g3)" stroke="#226b2a" stroke-width="1"/><rect x="968.7" y="770.7" width="42.0" height="42.799999999999955" fill="url(#g4)" stroke="#ee7b35" stroke-width="1"/><rect x="968.7" y="813.5" width="42.0" height="16.5" fill="url(#g5)" stroke="#27648a" stroke-width="1"/><rect x="1073.6" y="289.5" width="42.0" height="71.10000000000002" fill="url(#g0)" stroke="#54a83a" stroke-width="1"/><rect x="1073.6" y="360.6" width="42.0" height="112.79999999999995" fill="url(#g1)" stroke="#a03a9c" stroke-width="1"/><rect x="1073.6" y="473.4" width="42.0" height="146.20000000000005" fill="url(#g2)" stroke="#2a9fd8" stroke-width="1"/><rect x="1073.6" y="619.6" width="42.0" height="124.0" fill="url(#g3)" stroke="#226b2a" stroke-width="1"/><rect x="1073.6" y="743.6" width="42.0" height="58.799999999999955" fill="url(#g4)" stroke="#ee7b35" stroke-width="1"/><rect x="1073.6" y="802.4" width="42.0" height="27.600000000000023" fill="url(#g5)" stroke="#27648a" stroke-width="1"/><rect x="1179.7" y="289.5" width="42.0" height="107.89999999999998" fill="url(#g0)" stroke="#54a83a" stroke-width="1"/><rect x="1179.7" y="397.4" width="42.0" height="118.89999999999998" fill="url(#g1)" stroke="#a03a9c" stroke-width="1"/><rect x="1179.7" y="516.3" width="42.0" height="141.30000000000007" fill="url(#g2)" stroke="#2a9fd8" stroke-width="1"/><rect x="1179.7" y="657.6" width="42.0" height="101.89999999999998" fill="url(#g3)" stroke="#226b2a" stroke-width="1"/><rect x="1179.7" y="759.5" width="42.0" height="48.89999999999998" fill="url(#g4)" stroke="#ee7b35" stroke-width="1"/><rect x="1179.7" y="808.4" width="42.0" height="21.600000000000023" fill="url(#g5)" stroke="#27648a" stroke-width="1"/></svg>
<div class="a" style="left:461.95px;top:170.80px;font-size:14px;line-height:20px;color:#808080;font-weight:normal;">120.0</div>
<div class="a" style="left:461.95px;top:278.80px;font-size:14px;line-height:20px;color:#808080;font-weight:normal;">100.0</div>
<div class="a" style="left:469.75px;top:386.80px;font-size:14px;line-height:20px;color:#808080;font-weight:normal;">80.0</div>
<div class="a" style="left:469.75px;top:494.80px;font-size:14px;line-height:20px;color:#808080;font-weight:normal;">60.0</div>
<div class="a" style="left:469.75px;top:602.80px;font-size:14px;line-height:20px;color:#808080;font-weight:normal;">40.0</div>
<div class="a" style="left:469.75px;top:710.80px;font-size:14px;line-height:20px;color:#808080;font-weight:normal;">20.0</div>
<div class="a" style="left:477.53px;top:818.80px;font-size:14px;line-height:20px;color:#808080;font-weight:normal;">0.0</div>
<div class="a" style="left:534.99px;top:842.00px;font-size:14px;line-height:20px;color:#7f7f7f;font-weight:normal;">20歳-29歳</div>
<div class="a" style="left:640.49px;top:842.00px;font-size:14px;line-height:20px;color:#7f7f7f;font-weight:normal;">30歳-39歳</div>
<div class="a" style="left:746.69px;top:842.00px;font-size:14px;line-height:20px;color:#7f7f7f;font-weight:normal;">40歳-49歳</div>
<div class="a" style="left:851.69px;top:842.00px;font-size:14px;line-height:20px;color:#7f7f7f;font-weight:normal;">50歳-59歳</div>
<div class="a" style="left:957.79px;top:842.00px;font-size:14px;line-height:20px;color:#7f7f7f;font-weight:normal;">60歳-69歳</div>
<div class="a" style="left:1065.81px;top:842.00px;font-size:14px;line-height:20px;color:#7f7f7f;font-weight:normal;">70歳以上</div>
<div class="a" style="left:1186.70px;top:842.00px;font-size:14px;line-height:20px;color:#7f7f7f;font-weight:normal;">総数</div>
<div class="a" style="left:867.42px;top:874.00px;font-size:14px;line-height:20px;color:#7f7f7f;font-weight:normal;">2023</div>
<div class="a" style="left:466px;top:141px;width:104px;height:22px;background:linear-gradient(#e4e4e4,#c4c4c4)"></div>
<div class="a" style="left:470.00px;top:141.50px;font-size:14px;line-height:20px;color:#000;font-weight:normal;">合計 / 割合 (%)</div>
<div class="a" style="left:466px;top:903px;width:94px;height:22px;background:linear-gradient(#e4e4e4,#c4c4c4)"></div>
<div class="a" style="left:471.00px;top:904.00px;font-size:13px;line-height:18px;color:#000;font-weight:normal;transform:scaleX(1.0335);transform-origin:0 50%;">日付 (年)</div>
<svg class="a" style="left:531px;top:906px" width="26" height="17" viewBox="0 0 26 17"><path d="M2 10 H9 L5.5 14 Z" fill="#333"/><path d="M9 1.2 H22.6 Q23.4 1.3 22.9 2.1 L16.8 8.4 V15.6 H13.5 V8.4 L8.7 2.1 Q8.3 1.3 9 1.2 Z" fill="#707070"/></svg>
<div class="a" style="left:561px;top:903px;width:80px;height:22px;background:linear-gradient(#e4e4e4,#c4c4c4)"></div>
<div class="a" style="left:565.00px;top:904.00px;font-size:13px;line-height:18px;color:#000;font-weight:normal;">年齢階級</div>
<svg class="a" style="left:624px;top:910px" width="12" height="8" viewBox="0 0 12 8"><path d="M1 2 H11 L6 7 Z" fill="#333"/></svg>
<div class="a" style="left:1273px;top:427px;width:159px;height:21px;background:linear-gradient(#e4e4e4,#c4c4c4)"></div>
<div class="a" style="left:1277.00px;top:428.50px;font-size:13px;line-height:18px;color:#1f1f1f;font-weight:normal;">性別</div>
<svg class="a" style="left:1403px;top:430px" width="26" height="17" viewBox="0 0 26 17"><path d="M2 10 H9 L5.5 14 Z" fill="#333"/><path d="M9 1.2 H22.6 Q23.4 1.3 22.9 2.1 L16.8 8.4 V15.6 H13.5 V8.4 L8.7 2.1 Q8.3 1.3 9 1.2 Z" fill="#707070"/></svg>
<div class="a" style="left:1273px;top:449.5px;width:159px;height:21px;background:linear-gradient(#e4e4e4,#c4c4c4)"></div>
<div class="a" style="left:1276.00px;top:451.00px;font-size:13px;line-height:18px;color:#1f1f1f;font-weight:normal;transform:scaleX(1.0342);transform-origin:0 50%;">脂肪エネルギー比率</div>
<svg class="a" style="left:1403px;top:452.5px" width="26" height="17" viewBox="0 0 26 17"><path d="M2 10 H9 L5.5 14 Z" fill="#333"/><path d="M9 1.2 H22.6 Q23.4 1.3 22.9 2.1 L16.8 8.4 V15.6 H13.5 V8.4 L8.7 2.1 Q8.3 1.3 9 1.2 Z" fill="#707070"/></svg>
<div class="a" style="left:1279px;top:481.7px;width:9px;height:9px;background:linear-gradient(#a7d3a0,#8bc57d);border:1px solid #54a83a"></div>
<div class="a" style="left:1292.00px;top:476.20px;font-size:14px;line-height:20px;color:#8c8c8c;font-weight:normal;transform:scaleX(0.9848);transform-origin:0 50%;">総数 - 35%以上</div>
<div class="a" style="left:1279px;top:509.79999999999995px;width:9px;height:9px;background:linear-gradient(#d4a2cc,#c07ab2);border:1px solid #a03a9c"></div>
<div class="a" style="left:1292.00px;top:504.30px;font-size:14px;line-height:20px;color:#8c8c8c;font-weight:normal;transform:scaleX(0.9779);transform-origin:0 50%;">総数 - 30%-35%未満</div>
<div class="a" style="left:1279px;top:537.9px;width:9px;height:9px;background:linear-gradient(#9fd0f5,#79bbe9);border:1px solid #2a9fd8"></div>
<div class="a" style="left:1292.00px;top:532.40px;font-size:14px;line-height:20px;color:#8c8c8c;font-weight:normal;transform:scaleX(0.9779);transform-origin:0 50%;">総数 - 25%-30%未満</div>
<div class="a" style="left:1279px;top:566.0px;width:9px;height:9px;background:linear-gradient(#9fb59d,#789c76);border:1px solid #226b2a"></div>
<div class="a" style="left:1292.00px;top:560.50px;font-size:14px;line-height:20px;color:#8c8c8c;font-weight:normal;transform:scaleX(0.9779);transform-origin:0 50%;">総数 - 20%-25%未満</div>
<div class="a" style="left:1279px;top:594.1px;width:9px;height:9px;background:linear-gradient(#f6bba6,#f29c7c);border:1px solid #ee7b35"></div>
<div class="a" style="left:1292.00px;top:588.60px;font-size:14px;line-height:20px;color:#8c8c8c;font-weight:normal;transform:scaleX(0.9779);transform-origin:0 50%;">総数 - 15%-20%未満</div>
<div class="a" style="left:1279px;top:622.2px;width:9px;height:9px;background:linear-gradient(#a2b3c2,#7a93a8);border:1px solid #27648a"></div>
<div class="a" style="left:1292.00px;top:616.70px;font-size:14px;line-height:20px;color:#8c8c8c;font-weight:normal;transform:scaleX(0.9848);transform-origin:0 50%;">総数 - 15%未満</div>
<div class="a" style="left:1391px;top:903px;width:19px;height:22px;background:linear-gradient(#e4e4e4,#c4c4c4)"></div>
<svg class="a" style="left:1391px;top:903px" width="19" height="22" viewBox="0 0 19 22"><path d="M9.5 7 V16 M5 11.5 H14" stroke="#444" stroke-width="1.8"/></svg>
<div class="a" style="left:1411px;top:903px;width:19px;height:22px;background:linear-gradient(#e4e4e4,#c4c4c4)"></div>
<svg class="a" style="left:1411px;top:903px" width="19" height="22" viewBox="0 0 19 22"><path d="M5 11.5 H14" stroke="#444" stroke-width="1.8"/></svg>
<svg class="a" style="left:0px;top:0px" width="1920" height="995" viewBox="0 0 1920 995"><defs><clipPath id="hc"><rect x="0" y="127.5" width="1920" height="900"/></clipPath></defs><rect x="453.5" y="131.8" width="992.5" height="805.8" fill="none" stroke="#656565" stroke-width="1.6"/><g clip-path="url(#hc)"><circle cx="453.7" cy="131.8" r="6" fill="#fff" stroke="#636363" stroke-width="2.3"/><circle cx="453.7" cy="534.7" r="6" fill="#fff" stroke="#636363" stroke-width="2.3"/><circle cx="453.7" cy="937.5" r="6" fill="#fff" stroke="#636363" stroke-width="2.3"/><circle cx="949.8" cy="131.8" r="6" fill="#fff" stroke="#636363" stroke-width="2.3"/><circle cx="949.8" cy="937.5" r="6" fill="#fff" stroke="#636363" stroke-width="2.3"/><circle cx="1445.8" cy="131.8" r="6" fill="#fff" stroke="#636363" stroke-width="2.3"/><circle cx="1445.8" cy="534.7" r="6" fill="#fff" stroke="#636363" stroke-width="2.3"/><circle cx="1445.8" cy="937.5" r="6" fill="#fff" stroke="#636363" stroke-width="2.3"/></g></svg>
<div class="a" style="left:1456px;top:98px;width:27px;height:855px;background:#e4e8f0"></div>
<div class="a" style="left:1459px;top:99px;width:21px;height:856px;background:#f3f3f3;border-radius:10px"></div>
<svg class="a" style="left:1459px;top:99px" width="21" height="856" viewBox="0 0 21 856"><path d="M5 13.5 L10.5 5 L16 13.5 Z" fill="#707070"/><path d="M5 842 L10.5 850.5 L16 842 Z" fill="#707070"/></svg>
<div class="a" style="left:1464px;top:119px;width:11px;height:503px;background:#707070;border-radius:5.5px"></div>
<div class="a" style="left:0px;top:953px;width:212.5px;height:40px;background:#e4e8f0;border-radius:0 7px 0 0"></div>
<div class="a" style="left:279px;top:953px;width:1204px;height:40px;background:#e4e8f0;border-radius:7px 0 0 0"></div>
<div class="a" style="left:1456px;top:953px;width:27px;height:40px;background:#e4e8f0"></div>
<div class="a" style="left:0px;top:993px;width:1920px;height:2px;background:#fff"></div>
<div class="a" style="left:0px;top:992.5px;width:1920px;height:1px;background:#c8c8c8"></div>
<svg class="a" style="left:28px;top:962px" width="60" height="20" viewBox="0 0 60 20"><path d="M10.5 4 L5 10 L10.5 16" fill="none" stroke="#8a8a8a" stroke-width="1.3"/><path d="M45.5 4 L51 10 L45.5 16" fill="none" stroke="#8a8a8a" stroke-width="1.3"/></svg>
<div class="a" style="left:152.30px;top:960.50px;font-size:18px;line-height:25px;color:#262626;font-weight:normal;transform:scaleX(1.0586);transform-origin:0 50%;">data</div>
<div class="a" style="left:207px;top:961px;width:1px;height:24px;background:#c2c2c2"></div>
<div class="a" style="left:212.5px;top:953px;width:66.5px;height:35px;background:#fff;border-radius:0 0 7px 7px"></div>
<div class="a" style="left:225.80px;top:957.00px;font-size:18px;line-height:25px;color:#262626;font-weight:normal;transform:scaleX(1.0886);transform-origin:0 50%;">pivot</div>
<div class="a" style="left:222.7px;top:983px;width:46.3px;height:2px;background:#107c41"></div>
<div class="a" style="left:284px;top:961px;width:1px;height:24px;background:#c2c2c2"></div>
<svg class="a" style="left:336px;top:963px" width="16" height="16" viewBox="0 0 16 16"><path d="M8 1.5 V14.5 M1.5 8 H14.5" stroke="#333" stroke-width="1.5"/></svg>
<svg class="a" style="left:889px;top:966px" width="10" height="16" viewBox="0 0 10 16"><circle cx="5" cy="2.5" r="1.4" fill="#333"/><circle cx="5" cy="7.5" r="1.4" fill="#333"/><circle cx="5" cy="12.5" r="1.4" fill="#333"/></svg>
<div class="a" style="left:914px;top:962px;width:545px;height:21px;background:#f3f3f3;border-radius:10.5px"></div>
<svg class="a" style="left:914px;top:962px" width="545" height="21" viewBox="0 0 545 21"><path d="M15 5 L6.5 10.5 L15 16 Z" fill="#707070"/><path d="M530 5 L538.5 10.5 L530 16 Z" fill="#707070"/></svg>
<div class="a" style="left:935.5px;top:967px;width:421.5px;height:11px;background:#707070;border-radius:5.5px"></div>
<div class="a" style="left:1483px;top:98px;width:437px;height:895px;background:#f0f0f0"></div>
<div class="a" style="left:1482px;top:98px;width:1px;height:895px;background:#c6c6c6"></div>
<div class="a" style="left:1497.50px;top:113.00px;font-size:17px;line-height:24px;color:#262626;font-weight:bold;transform:scaleX(0.8303);transform-origin:0 50%;">ピボットグラフのフィールド</div>
<svg class="a" style="left:1840px;top:117.5px" width="22" height="14" viewBox="0 0 22 14"><path d="M2 2.5 L11 11.5 L20 2.5" fill="none" stroke="#333" stroke-width="1.4"/></svg>
<svg class="a" style="left:1884px;top:117px" width="18" height="18" viewBox="0 0 18 18"><path d="M2 2 L14.5 14.5 M14.5 2 L2 14.5" stroke="#333" stroke-width="1.4"/></svg>
<div class="a" style="left:1498.00px;top:151.00px;font-size:14px;line-height:20px;color:#262626;font-weight:bold;transform:scaleX(0.8429);transform-origin:0 50%;">アクティブ</div>
<div class="a" style="left:1589.00px;top:151.00px;font-size:14px;line-height:20px;color:#262626;font-weight:normal;transform:scaleX(0.8571);transform-origin:0 50%;">すべて</div>
<div class="a" style="left:1498px;top:179px;width:62px;height:3px;background:#107c41"></div>
<div class="a" style="left:1498.00px;top:195.50px;font-size:14px;line-height:20px;color:#262626;font-weight:normal;transform:scaleX(0.8500);transform-origin:0 50%;">レポートに追加するフィールドを選択してください:</div>
<div class="a" style="left:1848px;top:187px;width:57px;height:35px;background:#fff;border:1px solid #7a7a7a"></div>
<svg class="a" style="left:1848px;top:187px" width="57" height="35" viewBox="0 0 57 35"><g transform="translate(22,17)"><path d="M6.57 -2.94 L9.28 -2.47 L9.28 2.47 L6.57 2.94 L5.83 4.23 L6.78 6.80 L2.50 9.27 L0.74 7.16 L-0.74 7.16 L-2.50 9.27 L-6.78 6.80 L-5.83 4.23 L-6.57 2.94 L-9.28 2.47 L-9.28 -2.47 L-6.57 -2.94 L-5.83 -4.23 L-6.78 -6.80 L-2.50 -9.27 L-0.74 -7.16 L0.74 -7.16 L2.50 -9.27 L6.78 -6.80 L5.83 -4.23 Z" fill="none" stroke="#333" stroke-width="1.3" stroke-linejoin="round"/><circle r="3.2" fill="none" stroke="#333" stroke-width="1.3"/></g><path d="M42 15.5 L45.5 19 L49 15.5" fill="none" stroke="#333" stroke-width="1.3"/></svg>
<div class="a" style="left:1498px;top:239px;width:407px;height:30px;background:#fff;border:1px solid #a6a6a6"></div>
<div class="a" style="left:1506.00px;top:243.50px;font-size:14px;line-height:20px;color:#7a7a7a;font-weight:normal;transform:scaleX(1.0714);transform-origin:0 50%;">検索</div>
<svg class="a" style="left:1876px;top:242px" width="26" height="24" viewBox="0 0 26 24"><circle cx="17" cy="8.8" r="6.6" fill="none" stroke="#333" stroke-width="1.4"/><path d="M12.3 13.5 L5 21" stroke="#333" stroke-width="1.5"/></svg>
<div class="a" style="left:1498px;top:291px;width:407px;height:252px;background:#fff;border:1px solid #a0a0a0"></div>
<div class="a" style="left:1883px;top:292px;width:21px;height:250px;background:#f0f0f0"></div>
<svg class="a" style="left:1883px;top:292px" width="21" height="250" viewBox="0 0 21 250"><path d="M5.5 15 L10.5 8 L15.5 15 Z" fill="#707070"/><path d="M5.5 235 L10.5 242 L15.5 235 Z" fill="#707070"/></svg>
<div class="a" style="left:1888px;top:313px;width:11px;height:185px;background:#707070"></div>
<svg class="a" style="left:1505px;top:292px" width="40" height="22" viewBox="0 0 40 22"><path d="M2.5 13.5 H10 V6.3" fill="none" stroke="#707070" stroke-width="1.8"/><rect x="18" y="1.8" width="18.6" height="18.6" fill="#fff" stroke="#444" stroke-width="1.4"/><rect x="18.7" y="2.5" width="17.2" height="3.2" fill="#bdbdbd"/><path d="M18 6.3 H36.6" stroke="#444" stroke-width="1"/><path d="M18 11 H36.6 M18 16 H36.6 M24.4 6.3 V20.4 M30.7 6.3 V20.4" stroke="#9a9a9a" stroke-width="1"/></svg>
<div class="a" style="left:1545.00px;top:292.00px;font-size:15.5px;line-height:22px;color:#1f1f1f;font-weight:bold;transform:scaleX(1.1290);transform-origin:0 50%;">_00450_mhlw_00450171_hyo4_full_list</div>
<div class="a" style="left:1546px;top:316.2px;width:16px;height:16px;background:#fff;border:1px solid #6e6e6e"></div>
<div class="a" style="left:1569.00px;top:316.50px;font-size:15px;line-height:21px;color:#1f1f1f;font-weight:normal;">日付</div>
<div class="a" style="left:1546px;top:347.3px;width:16px;height:16px;background:#107c41"></div>
<svg class="a" style="left:1546px;top:347.3px" width="16" height="16" viewBox="0 0 16 16"><path d="M4 8 L7 11 L12.5 5.2" fill="none" stroke="#fff" stroke-width="1.3"/></svg>
<div class="a" style="left:1569.00px;top:347.60px;font-size:15px;line-height:21px;color:#1f1f1f;font-weight:bold;transform:scaleX(0.9667);transform-origin:0 50%;">性別</div>
<svg class="a" style="left:1862px;top:348.3px" width="18" height="16" viewBox="0 0 18 16"><path d="M1.5 1.5 H16.5 L10.5 8 V14.5 L7.5 14.5 V8 Z" fill="none" stroke="#444" stroke-width="1.1"/></svg>
<div class="a" style="left:1546px;top:378.4px;width:16px;height:16px;background:#107c41"></div>
<svg class="a" style="left:1546px;top:378.4px" width="16" height="16" viewBox="0 0 16 16"><path d="M4 8 L7 11 L12.5 5.2" fill="none" stroke="#fff" stroke-width="1.3"/></svg>
<div class="a" style="left:1569.00px;top:378.70px;font-size:15px;line-height:21px;color:#1f1f1f;font-weight:bold;">年齢階級</div>
<div class="a" style="left:1546px;top:409.5px;width:16px;height:16px;background:#107c41"></div>
<svg class="a" style="left:1546px;top:409.5px" width="16" height="16" viewBox="0 0 16 16"><path d="M4 8 L7 11 L12.5 5.2" fill="none" stroke="#fff" stroke-width="1.3"/></svg>
<div class="a" style="left:1569.00px;top:409.80px;font-size:15px;line-height:21px;color:#1f1f1f;font-weight:bold;transform:scaleX(0.9148);transform-origin:0 50%;">脂肪エネルギー比率</div>
<svg class="a" style="left:1862px;top:410.5px" width="18" height="16" viewBox="0 0 18 16"><path d="M1.5 1.5 H16.5 L10.5 8 V14.5 L7.5 14.5 V8 Z" fill="none" stroke="#444" stroke-width="1.1"/></svg>
<div class="a" style="left:1546px;top:440.6px;width:16px;height:16px;background:#107c41"></div>
<svg class="a" style="left:1546px;top:440.6px" width="16" height="16" viewBox="0 0 16 16"><path d="M4 8 L7 11 L12.5 5.2" fill="none" stroke="#fff" stroke-width="1.3"/></svg>
<div class="a" style="left:1569.00px;top:440.90px;font-size:15px;line-height:21px;color:#1f1f1f;font-weight:bold;transform:scaleX(1.1304);transform-origin:0 50%;">割合 (%)</div>
<div class="a" style="left:1546px;top:471.7px;width:16px;height:16px;background:#107c41"></div>
<svg class="a" style="left:1546px;top:471.7px" width="16" height="16" viewBox="0 0 16 16"><path d="M4 8 L7 11 L12.5 5.2" fill="none" stroke="#fff" stroke-width="1.3"/></svg>
<div class="a" style="left:1569.00px;top:472.00px;font-size:15px;line-height:21px;color:#1f1f1f;font-weight:bold;transform:scaleX(1.0647);transform-origin:0 50%;">日付 (年)</div>
<svg class="a" style="left:1862px;top:472.7px" width="18" height="16" viewBox="0 0 18 16"><path d="M1.5 1.5 H16.5 L10.5 8 V14.5 L7.5 14.5 V8 Z" fill="none" stroke="#444" stroke-width="1.1"/></svg>
<div class="a" style="left:1546px;top:502.8px;width:16px;height:16px;background:#fff;border:1px solid #6e6e6e"></div>
<div class="a" style="left:1569.00px;top:503.10px;font-size:15px;line-height:21px;color:#1f1f1f;font-weight:normal;transform:scaleX(1.0429);transform-origin:0 50%;">日付 (四半期)</div>
<div class="a" style="left:1546px;top:533.9px;width:16px;height:16px;background:#fff;border:1px solid #6e6e6e"></div>
<div class="a" style="left:1569.00px;top:534.20px;font-size:15px;line-height:21px;color:#1f1f1f;font-weight:normal;transform:scaleX(1.0647);transform-origin:0 50%;">日付 (月)</div>
<div class="a" style="left:1498px;top:542px;width:407px;height:1px;background:#a0a0a0"></div>
<div class="a" style="left:1499px;top:543px;width:405px;height:18px;background:#f0f0f0"></div>
<div class="a" style="left:1500px;top:562px;width:409px;height:1px;background:repeating-linear-gradient(90deg,#c8c8c8 0 2px,transparent 2px 4px)"></div>
<div class="a" style="left:1503.00px;top:568.00px;font-size:14px;line-height:20px;color:#262626;font-weight:normal;transform:scaleX(0.8003);transform-origin:0 50%;">次のボックス間でフィールドをドラッグしてください:</div>
<div class="a" style="left:1703px;top:608px;width:1px;height:317px;background:#c4c4c4"></div>
<div class="a" style="left:1502px;top:766px;width:404px;height:1px;background:#c4c4c4"></div>
<svg class="a" style="left:1505px;top:609px" width="18" height="18" viewBox="0 0 18 18"><path d="M1.5 2 H16.5 L11 8.5 V16 H7 V8.5 Z" fill="#777"/></svg>
<div class="a" style="left:1530.00px;top:609.50px;font-size:14px;line-height:20px;color:#262626;font-weight:normal;transform:scaleX(0.7286);transform-origin:0 50%;">フィルター</div>
<svg class="a" style="left:1710px;top:609px" width="16" height="18" viewBox="0 0 16 18"><rect x="1.5" y="3" width="2" height="11" fill="#888"/><rect x="5" y="3" width="2" height="11" fill="#888"/><rect x="8.5" y="3" width="1.2" height="11" fill="#888"/><rect x="11" y="3" width="1.2" height="11" fill="#888"/></svg>
<div class="a" style="left:1734.00px;top:610.00px;font-size:14px;line-height:20px;color:#262626;font-weight:normal;transform:scaleX(1.1413);transform-origin:0 50%;">凡例 (系列)</div>
<div class="a" style="left:1502px;top:634px;width:194px;height:125px;background:#fff"></div>
<div class="a" style="left:1706px;top:634px;width:200px;height:125px;background:#fff"></div>
<div class="a" style="left:1707px;top:636px;width:198px;height:27px;background:#fff;border:1px solid #b5b5b5"></div>
<div class="a" style="left:1717.00px;top:639.50px;font-size:14px;line-height:20px;color:#262626;font-weight:normal;transform:scaleX(1.0357);transform-origin:0 50%;">性別</div>
<svg class="a" style="left:1887px;top:645px" width="12" height="9" viewBox="0 0 12 9"><path d="M2 2.5 L6 6.5 L10 2.5" fill="none" stroke="#333" stroke-width="1.3"/></svg>
<div class="a" style="left:1707px;top:665px;width:198px;height:27px;background:#fff;border:1px solid #b5b5b5"></div>
<div class="a" style="left:1717.00px;top:668.50px;font-size:14px;line-height:20px;color:#262626;font-weight:normal;transform:scaleX(0.9444);transform-origin:0 50%;">脂肪エネルギー比率</div>
<svg class="a" style="left:1887px;top:674px" width="12" height="9" viewBox="0 0 12 9"><path d="M2 2.5 L6 6.5 L10 2.5" fill="none" stroke="#333" stroke-width="1.3"/></svg>
<svg class="a" style="left:1507px;top:778px" width="14" height="14" viewBox="0 0 14 14"><path d="M0 2 H13 M0 5 H13 M0 8 H13 M0 11 H13" stroke="#888" stroke-width="1.2"/></svg>
<div class="a" style="left:1529.60px;top:776.00px;font-size:14px;line-height:20px;color:#262626;font-weight:normal;transform:scaleX(1.1223);transform-origin:0 50%;">軸 (分類項目)</div>
<svg class="a" style="left:1711px;top:777px" width="16" height="16" viewBox="0 0 16 16"><path d="M13 2 H2 L8 8 L2 14 H13" fill="none" stroke="#777" stroke-width="1.4"/></svg>
<div class="a" style="left:1734.00px;top:776.00px;font-size:14px;line-height:20px;color:#262626;font-weight:normal;transform:scaleX(1.0714);transform-origin:0 50%;">値</div>
<div class="a" style="left:1502px;top:800px;width:194px;height:125px;background:#fff"></div>
<div class="a" style="left:1706px;top:800px;width:200px;height:125px;background:#fff"></div>
<div class="a" style="left:1503px;top:802px;width:192px;height:27px;background:#fff;border:1px solid #b5b5b5"></div>
<div class="a" style="left:1513.00px;top:805.50px;font-size:14px;line-height:20px;color:#262626;font-weight:normal;transform:scaleX(1.1590);transform-origin:0 50%;">日付 (年)</div>
<svg class="a" style="left:1677px;top:811px" width="12" height="9" viewBox="0 0 12 9"><path d="M2 2.5 L6 6.5 L10 2.5" fill="none" stroke="#333" stroke-width="1.3"/></svg>
<div class="a" style="left:1503px;top:831px;width:192px;height:27px;background:#fff;border:1px solid #b5b5b5"></div>
<div class="a" style="left:1513.00px;top:834.50px;font-size:14px;line-height:20px;color:#262626;font-weight:normal;transform:scaleX(1.0536);transform-origin:0 50%;">年齢階級</div>
<svg class="a" style="left:1677px;top:840px" width="12" height="9" viewBox="0 0 12 9"><path d="M2 2.5 L6 6.5 L10 2.5" fill="none" stroke="#333" stroke-width="1.3"/></svg>
<div class="a" style="left:1707px;top:802px;width:198px;height:27px;background:#fff;border:1px solid #b5b5b5"></div>
<div class="a" style="left:1717.00px;top:805.50px;font-size:14px;line-height:20px;color:#262626;font-weight:normal;transform:scaleX(1.1892);transform-origin:0 50%;">合計 / 割合 (%)</div>
<svg class="a" style="left:1887px;top:811px" width="12" height="9" viewBox="0 0 12 9"><path d="M2 2.5 L6 6.5 L10 2.5" fill="none" stroke="#333" stroke-width="1.3"/></svg>
<div class="a" style="left:1506px;top:958px;width:16px;height:16px;background:#fff;border:1px solid #6e6e6e;border-radius:2px"></div>
<div class="a" style="left:1530.00px;top:956.50px;font-size:14px;line-height:20px;color:#262626;font-weight:normal;transform:scaleX(0.8901);transform-origin:0 50%;">レイアウトの更新を保留する</div>
<div class="a" style="left:1862px;top:950px;width:44px;height:31px;border:1px solid #d9d9d9"></div>
<div class="a" style="left:1869.00px;top:956.00px;font-size:14px;line-height:20px;color:#b0b0b0;font-weight:normal;transform:scaleX(1.0357);transform-origin:0 50%;">更新</div>
</body>
</html>
